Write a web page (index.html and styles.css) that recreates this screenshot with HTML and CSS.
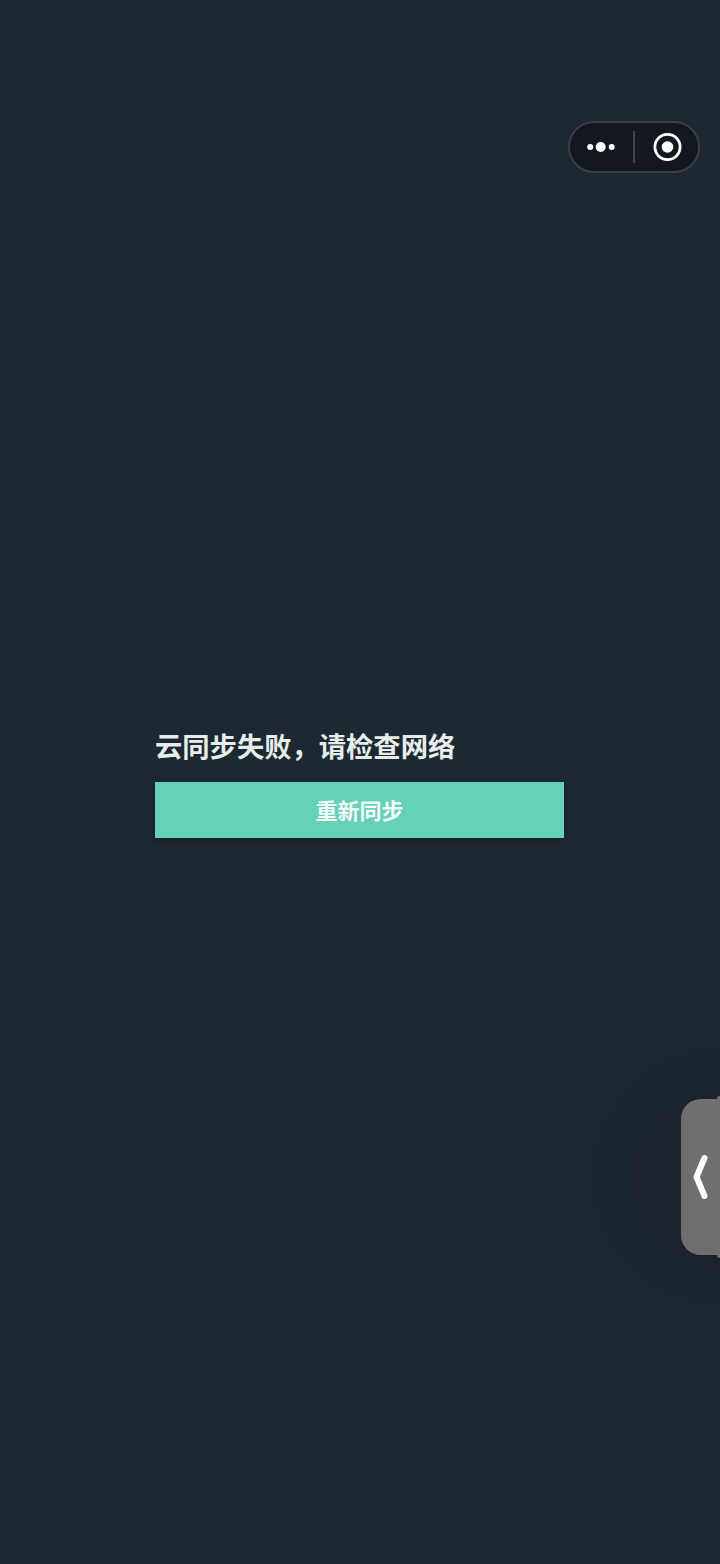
FILE: index.html
```html
<!DOCTYPE html>
<html lang="zh-CN">
<head>
    <meta charset="UTF-8">
    <meta name="viewport" content="width=device-width, initial-scale=1.0">
    <title>云同步</title>
    <link rel="stylesheet" href="styles.css">
</head>
<body>

<div class="capsule">
    <div class="capsule-more">
        <svg width="30" height="12" viewBox="0 0 30 12">
            <circle cx="3.2" cy="6" r="3" fill="#fff"/>
            <circle cx="13.7" cy="6" r="5" fill="#fff"/>
            <circle cx="24.7" cy="6" r="3" fill="#fff"/>
        </svg>
    </div>
    <div class="capsule-line"></div>
    <div class="capsule-close">
        <svg width="30" height="30" viewBox="0 0 30 30">
            <circle cx="15.5" cy="15" r="12.6" fill="none" stroke="#fff" stroke-width="2.8"/>
            <circle cx="15.5" cy="15" r="5.8" fill="#fff"/>
        </svg>
    </div>
</div>

<div class="container">
    <h1>云同步失败，请检查网络</h1>
    <button class="sync-btn">重新同步</button>
</div>

<div class="side-tab">
    <svg width="16" height="46" viewBox="0 0 16 46">
        <path d="M11.5 4 L3.5 23 L11.5 42" fill="none" stroke="#fff" stroke-width="6" stroke-linecap="round" stroke-linejoin="round"/>
    </svg>
</div>

</body>
</html>
```

FILE: styles.css
```css
body {
    margin: 0;
    height: 1564px;
    overflow: hidden;
    font-family: "Noto Sans CJK SC", "Noto Sans", sans-serif;
    background-color: #1e2832;
    background-image: radial-gradient(circle 270px at 720px 1178px, #1a232d 0%, #1c2630 55%, #1e2832 100%);
}
.container {
    width: 409px;
    margin-left: 155px;
    padding-top: 726px;
}
h1 {
    margin: 0 0 18px;
    font-size: 27.3px;
    line-height: 38px;
    font-weight: 700;
    color: #e6eeec;
    white-space: nowrap;
}
.sync-btn {
    display: block;
    width: 100%;
    height: 56px;
    padding: 0 0 2px;
    border: none;
    background-color: #65d1b7;
    color: #f4fbf9;
    font-family: inherit;
    font-size: 22px;
    font-weight: 700;
    box-shadow: 0 2px 6px rgba(0, 0, 0, 0.25);
}
.capsule {
    position: absolute;
    top: 121px;
    right: 20px;
    box-sizing: border-box;
    width: 132px;
    height: 52px;
    display: flex;
    align-items: center;
    background-color: #12181e;
    border: 2px solid #373f47;
    border-radius: 26px;
}
.capsule-more, .capsule-close {
    flex: 1;
    display: flex;
    justify-content: center;
    align-items: center;
}
.capsule-line {
    width: 2px;
    height: 32px;
    background-color: #3d444c;
}
.side-tab {
    position: absolute;
    top: 1099px;
    right: 0;
    width: 39px;
    height: 156px;
    display: flex;
    align-items: center;
    padding-left: 12px;
    box-sizing: border-box;
    background-color: #6f6f6f;
    border-radius: 20px 0 0 20px;
}
.side-tab::before {
    content: "";
    position: absolute;
    top: -3px;
    bottom: -3px;
    right: 0;
    width: 3px;
    background-color: #6f6f6f;
    border-radius: 3px 0 0 3px;
}
```
